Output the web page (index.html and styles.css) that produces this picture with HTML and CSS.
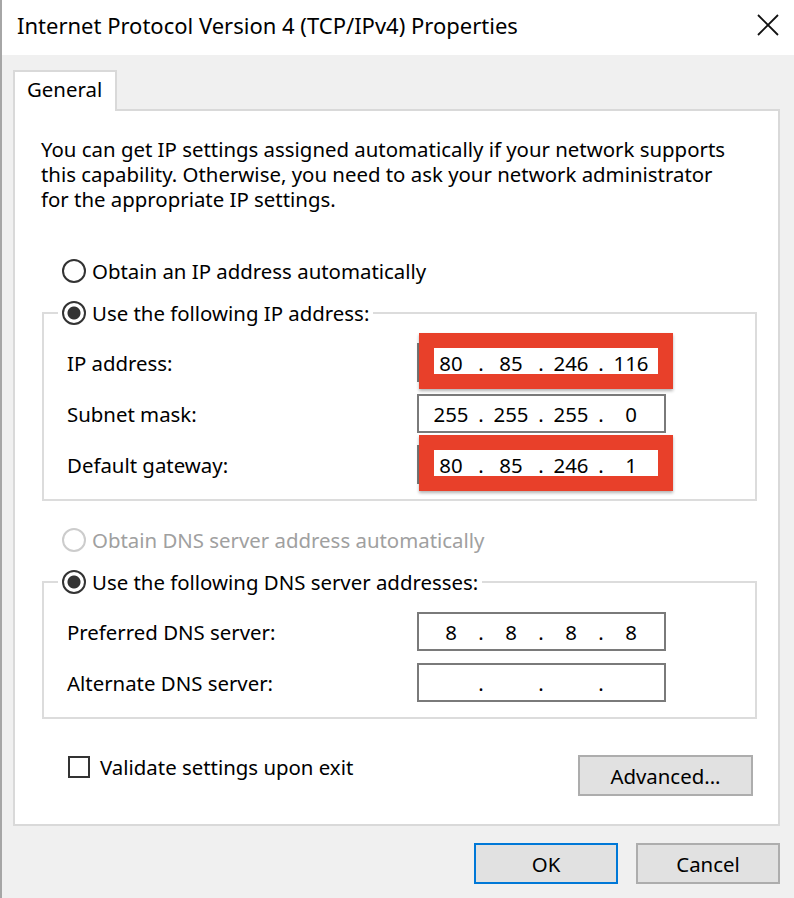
FILE: index.html
```html
<!DOCTYPE html>
<html lang="en">
<head>
    <meta charset="UTF-8">
    <meta name="viewport" content="width=device-width, initial-scale=1.0">
    <title>Internet Protocol Version 4 (TCP/IPv4) Properties</title>
    <link rel="stylesheet" href="styles.css">
</head>
<body>
    <div class="window">
        <div class="titlebar">
            <span class="title">Internet Protocol Version 4 (TCP/IPv4) Properties</span>
            <svg class="close" width="22" height="22" viewBox="0 0 22 22">
                <path d="M1 1 L21 21 M21 1 L1 21" stroke="#111" stroke-width="1.8" fill="none"/>
            </svg>
        </div>

        <div class="client">
            <div class="tabs">
                <div class="tab">General</div>
            </div>

            <div class="panel">
                <p class="intro">You can get IP settings assigned automatically if your network supports this capability. Otherwise, you need to ask your network administrator for the appropriate IP settings.</p>

                <div class="radio first"><span class="mark"></span>Obtain an IP address automatically</div>

                <fieldset class="group">
                    <legend><div class="radio"><span class="mark on"></span>Use the following IP address:</div></legend>
                    <div class="row">
                        <span>IP address:</span>
                        <div class="ip">
                            <span class="oct">80</span><span class="dot">.</span><span class="oct">85</span><span class="dot">.</span><span class="oct">246</span><span class="dot">.</span><span class="oct">116</span>
                            <span class="highlight"></span>
                        </div>
                    </div>
                    <div class="row">
                        <span>Subnet mask:</span>
                        <div class="ip">
                            <span class="oct">255</span><span class="dot">.</span><span class="oct">255</span><span class="dot">.</span><span class="oct">255</span><span class="dot">.</span><span class="oct">0</span>
                        </div>
                    </div>
                    <div class="row">
                        <span>Default gateway:</span>
                        <div class="ip">
                            <span class="oct">80</span><span class="dot">.</span><span class="oct">85</span><span class="dot">.</span><span class="oct">246</span><span class="dot">.</span><span class="oct">1</span>
                            <span class="highlight"></span>
                        </div>
                    </div>
                </fieldset>

                <div class="radio disabled"><span class="mark"></span>Obtain DNS server address automatically</div>

                <fieldset class="group">
                    <legend><div class="radio"><span class="mark on"></span>Use the following DNS server addresses:</div></legend>
                    <div class="row">
                        <span>Preferred DNS server:</span>
                        <div class="ip">
                            <span class="oct">8</span><span class="dot">.</span><span class="oct">8</span><span class="dot">.</span><span class="oct">8</span><span class="dot">.</span><span class="oct">8</span>
                        </div>
                    </div>
                    <div class="row">
                        <span>Alternate DNS server:</span>
                        <div class="ip">
                            <span class="oct"></span><span class="dot">.</span><span class="oct"></span><span class="dot">.</span><span class="oct"></span><span class="dot">.</span><span class="oct"></span>
                        </div>
                    </div>
                </fieldset>

                <div class="bottom-row">
                    <div class="check"><span class="box"></span>Validate settings upon exit</div>
                    <button class="btn advanced">Advanced...</button>
                </div>
            </div>

            <div class="buttons">
                <button class="btn default">OK</button>
                <button class="btn">Cancel</button>
            </div>
        </div>
    </div>
</body>
</html>
```

FILE: styles.css
```css
body {
    margin: 0;
    overflow: hidden;
    font-family: "Noto Sans", "Open Sans", sans-serif;
    font-size: 20.4px;
    color: #000;
}
.window {
    width: 792px;
    height: 898px;
    border-left: 2px solid #a6a6a6;
    background: #f0f0f0;
}
.titlebar {
    height: 55px;
    background: #fff;
    display: flex;
    align-items: center;
    justify-content: space-between;
    padding: 0 15px 0 15px;
    box-sizing: border-box;
}
.title {
    font-size: 22px;
    margin-top: -5px;
}
.close {
    margin-top: -6px;
}
.client {
    padding-left: 11px;
}
.tabs {
    display: flex;
    padding-top: 15px;
}
.tab {
    width: 104px;
    height: 41px;
    box-sizing: border-box;
    border: 2px solid #d9d9d9;
    border-bottom: none;
    background: #fff;
    padding: 3px 0 0 12px;
    margin-bottom: -2px;
    position: relative;
    z-index: 1;
}
.panel {
    width: 767px;
    box-sizing: border-box;
    background: #fff;
    border: 2px solid #d9d9d9;
    padding: 26px 25px 28px 26px;
}
.intro {
    margin: 0;
    line-height: 25px;
    width: 700px;
}
.radio {
    display: flex;
    align-items: center;
    gap: 6px;
    height: 30px;
}
.radio.first {
    margin: 44px 0 0 21px;
}
.radio.disabled {
    margin: 24px 0 0 21px;
    color: #a0a0a0;
}
.mark {
    width: 24px;
    height: 24px;
    box-sizing: border-box;
    border: 2px solid #333;
    border-radius: 50%;
    background: #fff;
}
.mark.on {
    background: radial-gradient(circle, #333 0 6px, #fff 7px);
}
.disabled .mark {
    border-color: #cccccc;
}
.group {
    width: 715px;
    box-sizing: border-box;
    margin: 12px 0 0 1px;
    border: 2px solid #dcdcdc;
    padding: 15px 0 15px 14px;
}
.group legend {
    padding: 0 4px;
}
.row {
    display: grid;
    grid-template-columns: 350px 249px;
    align-items: center;
    padding-left: 9px;
}
.row + .row {
    margin-top: 12px;
}
.ip {
    position: relative;
    height: 39px;
    box-sizing: border-box;
    border: 2px solid #7a7a7a;
    background: #fff;
    display: flex;
    align-items: center;
    padding-left: 7px;
}
.oct {
    width: 50px;
    text-align: center;
}
.dot {
    width: 10px;
    text-align: center;
}
.highlight {
    position: absolute;
    left: 0;
    top: -12px;
    width: 254px;
    height: 56px;
    box-sizing: border-box;
    border: 15px solid #e8402a;
    box-shadow: 0 2px 3px rgba(0, 0, 0, 0.3);
}
.bottom-row {
    display: flex;
    justify-content: space-between;
    align-items: flex-start;
    margin-top: 36px;
}
.check {
    display: flex;
    align-items: center;
    gap: 10px;
    margin-left: 27px;
    height: 23px;
}
.box {
    width: 22px;
    height: 22px;
    box-sizing: border-box;
    border: 2px solid #333;
    background: #fff;
}
.btn {
    font-family: inherit;
    font-size: 20.4px;
    color: #000;
    width: 144px;
    height: 41px;
    background: #e1e1e1;
    border: 2px solid #adadad;
    padding: 0;
}
.advanced {
    width: 175px;
}
.btn.default {
    border-color: #0078d7;
}
.buttons {
    display: flex;
    justify-content: flex-end;
    gap: 18px;
    width: 767px;
    margin-top: 17px;
}
```
